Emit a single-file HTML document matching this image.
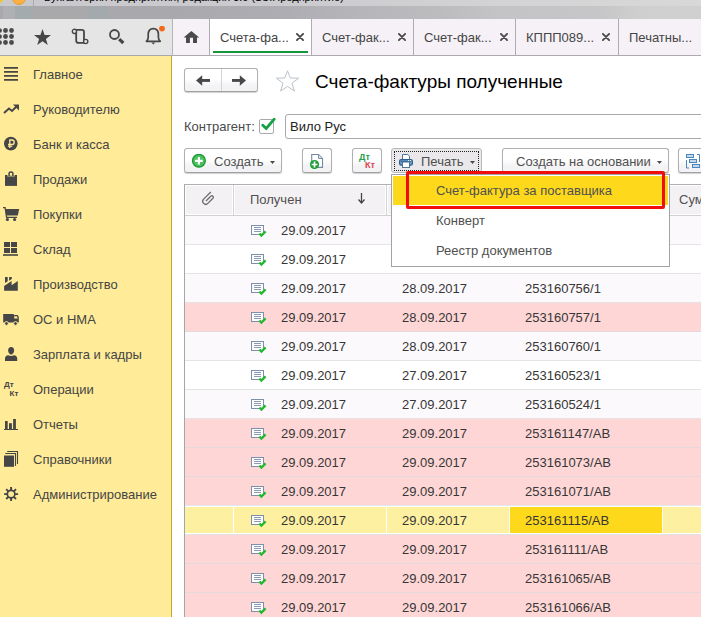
<!DOCTYPE html>
<html><head><meta charset="utf-8">
<style>
*{box-sizing:border-box;margin:0;padding:0}
html,body{width:701px;height:617px;overflow:hidden;background:#fff;font-family:"Liberation Sans",sans-serif;font-size:13px;color:#333}
.a{position:absolute;white-space:nowrap}
.btn{position:absolute;border:1px solid #b0b0b0;border-bottom-color:#a0a0a0;border-radius:3px;background:linear-gradient(#ffffff 45%,#f3f2f5 75%);box-shadow:0 1px 1px rgba(0,0,0,.18)}
.dd{position:absolute;width:5px;height:3px;background:#4a4a4a;clip-path:polygon(0 0,100% 0,50% 100%)}
.si{position:absolute;left:33px;color:#454545;white-space:nowrap}
.tx{position:absolute;color:#454545;white-space:nowrap}
.cell{position:absolute;white-space:nowrap;color:#363636}
</style></head><body>
<div class="a" style="left:0;top:0;width:701px;height:6px;background:linear-gradient(90deg,#c9c9cd 0px,#cbcbcf 300px,#d3d3d5 500px,#d8d8d8 701px);overflow:hidden"><div class="a" style="left:-6px;top:-6px;width:9px;height:9px;border-radius:50%;background:#f2c51c"></div><div class="a" style="left:12px;top:-9px;width:14px;height:14px;border-radius:50%;background:#fbb143;border:1px solid #e89a2a"></div><div class="a" style="left:33px;top:0;width:1px;height:6px;background:#aaa"></div><div class="a" style="left:44px;top:-9px;font-size:11px;color:#000">Бухгалтерия предприятия, редакция 3.0 (1С:Предприятие)</div></div>
<div class="a" style="left:0;top:6px;width:701px;height:13px;background:linear-gradient(90deg,#a9a9ab 0px,#a9a9ad 170px,#adadb3 290px,#b6b6ba 360px,#bcbcbf 440px,#c4c4c7 500px,#c6c6c8 600px,#cfcfcf 640px,#d0d0d0 701px)"></div>
<div class="a" style="left:3px;top:6px;width:12px;height:13px;background:#aeb0b3"></div>
<div class="a" style="left:15px;top:6px;width:17px;height:13px;background:#a4abae"></div>
<div class="a" style="left:88px;top:6px;width:20px;height:13px;background:#a4a9ae"></div>
<div class="a" style="left:0;top:19px;width:173px;height:37px;background:#e5e5e5;border-bottom:1px solid #a9a9ad;border-right:1px solid #b5b5b5"></div>
<svg class="a" style="left:0;top:0" width="20" height="50" viewBox="0 0 20 50"><circle cx="-0.5" cy="30.5" r="2.4" fill="#4a4c4a"/><circle cx="-0.5" cy="36.5" r="2.4" fill="#4a4c4a"/><circle cx="-0.5" cy="42.5" r="2.4" fill="#4a4c4a"/><circle cx="5.5" cy="30.5" r="2.4" fill="#4a4c4a"/><circle cx="5.5" cy="36.5" r="2.4" fill="#4a4c4a"/><circle cx="5.5" cy="42.5" r="2.4" fill="#4a4c4a"/><circle cx="11.5" cy="30.5" r="2.4" fill="#4a4c4a"/><circle cx="11.5" cy="36.5" r="2.4" fill="#4a4c4a"/><circle cx="11.5" cy="42.5" r="2.4" fill="#4a4c4a"/></svg>
<svg class="a" style="left:33px;top:28px" width="19" height="18" viewBox="0 0 19 18"><path d="M9.5 1 L11.6 7 L18 7 L12.9 10.9 L14.8 17 L9.5 13.3 L4.2 17 L6.1 10.9 L1 7 L7.4 7 Z" fill="#464646"/></svg>
<svg class="a" style="left:71px;top:28px" width="19" height="18" viewBox="0 0 19 18"><path d="M3.4 1.8 H10.8 Q13 1.8 13 4 V13" stroke="#464646" stroke-width="1.8" fill="none"/><path d="M5.2 4 V12.4 Q5.2 14.9 7.7 14.9 H14.7" stroke="#464646" stroke-width="1.8" fill="none"/><circle cx="3.4" cy="3.4" r="2.1" fill="#e5e5e5" stroke="#464646" stroke-width="1.4"/><circle cx="14.7" cy="13.5" r="2.1" fill="#e5e5e5" stroke="#464646" stroke-width="1.4"/></svg>
<svg class="a" style="left:106px;top:27px" width="19" height="18" viewBox="0 0 19 18"><circle cx="8.5" cy="7.5" r="4.5" stroke="#464646" stroke-width="1.8" fill="none"/><path d="M13.2 12.2 L17.3 16" stroke="#464646" stroke-width="3.2"/></svg>
<svg class="a" style="left:144px;top:26px" width="24" height="20" viewBox="0 0 24 20"><path d="M2.4 15.3 H16.2 Q14.5 14 14.4 11.5 V8.6 Q14.4 2.6 9.3 2.6 Q4.2 2.6 4.2 8.6 V11.5 Q4.1 14 2.4 15.3 Z" stroke="#464646" stroke-width="1.7" fill="none" stroke-linejoin="round"/><path d="M7.3 16.6 H11.3 L9.3 18.6 Z" fill="#464646"/><circle cx="18" cy="2.6" r="2.9" fill="#f46a1c"/></svg>
<div class="a" style="left:0;top:56px;width:172px;height:561px;background:#ffeb98;border-right:1px solid #c4a726"></div>
<div class="si" style="top:66.5px">Главное</div>
<div class="si" style="top:101.5px">Руководителю</div>
<div class="si" style="top:136.5px">Банк и касса</div>
<div class="si" style="top:171.5px">Продажи</div>
<div class="si" style="top:206.5px">Покупки</div>
<div class="si" style="top:241.5px">Склад</div>
<div class="si" style="top:276.5px">Производство</div>
<div class="si" style="top:311.5px">ОС и НМА</div>
<div class="si" style="top:346.5px">Зарплата и кадры</div>
<div class="si" style="top:381.5px">Операции</div>
<div class="si" style="top:416.5px">Отчеты</div>
<div class="si" style="top:451.5px">Справочники</div>
<div class="si" style="top:486.5px">Администрирование</div>
<svg class="a" style="left:0;top:60px" width="22" height="24"><path d="M4 7.8 H18 M4 11.85 H18 M4 15.9 H18 M4 19.95 H18" stroke="#464646" stroke-width="1.7"/></svg>
<svg class="a" style="left:0;top:99px" width="22" height="20"><path d="M4 14 L9 9.5 L12 12 L16.5 7.5" stroke="#464646" stroke-width="2" fill="none"/><path d="M13 5.5 H19 V11.5 Z" fill="#464646"/></svg>
<svg class="a" style="left:0;top:133px" width="22" height="22"><circle cx="10.8" cy="10.6" r="6.8" fill="#464646"/><path d="M9.8 15 V7 H12.1 Q14.2 7 14.2 9.2 Q14.2 11.4 12.1 11.4 H8 M8 13.2 H12.4" stroke="#ffeb98" stroke-width="1.3" fill="none"/></svg>
<svg class="a" style="left:0;top:168px" width="22" height="22"><path d="M5 7 H17 V17.9 H5 Z" fill="#464646"/><path d="M9.1 8.5 V5.6 Q9.1 3.9 11 3.9 Q12.9 3.9 12.9 5.6 V8.5" stroke="#ffeb98" stroke-width="3.3" fill="none"/><path d="M9.1 8.3 V5.6 Q9.1 3.9 11 3.9 Q12.9 3.9 12.9 5.6 V8.3" stroke="#464646" stroke-width="1.5" fill="none"/></svg>
<svg class="a" style="left:0;top:203px" width="22" height="22"><path d="M3 4.7 H5.1 L6.6 14.3 H17" stroke="#464646" stroke-width="1.3" fill="none"/><path d="M5.2 6 H19.2 L17.8 12.4 H6.2 Z" fill="#464646"/><circle cx="7.4" cy="16.5" r="1.6" fill="#464646"/><circle cx="14.6" cy="16.5" r="1.6" fill="#464646"/></svg>
<svg class="a" style="left:0;top:238px" width="22" height="22"><rect x="4" y="4" width="6" height="5" fill="#464646"/><rect x="11" y="4" width="6" height="5" fill="#464646"/><rect x="4" y="10" width="6" height="5" fill="#464646"/><rect x="11" y="10" width="6" height="5" fill="#464646"/><rect x="3" y="16.2" width="15" height="1.6" fill="#464646"/></svg>
<svg class="a" style="left:0;top:272px" width="22" height="22"><path d="M4.1 18.8 V13.9 L11.6 9 V13.2 L17.8 8.9 V18.8 Z" fill="#464646"/><path d="M5 5 H7.7 V9.3 L5 11 Z M9.1 5 H11.8 V7.1 L9.1 8.8 Z" fill="#464646"/></svg>
<svg class="a" style="left:0;top:308px" width="22" height="22"><path d="M3.2 6 H13.8 V7 H17.6 L18.8 9 V14.6 H3.2 Z" fill="#464646"/><path d="M14.2 8.2 H16.9 L17.8 10.4 H14.2 Z" fill="#ffeb98"/><circle cx="6.5" cy="15.5" r="1.9" fill="#464646" stroke="#ffeb98" stroke-width="1"/><circle cx="15.5" cy="15.5" r="1.9" fill="#464646" stroke="#ffeb98" stroke-width="1"/></svg>
<svg class="a" style="left:0;top:343px" width="22" height="22"><path d="M11.1 4 Q14.1 4 14.1 7.5 Q14.1 10.4 11.1 11.8 Q8.1 10.4 8.1 7.5 Q8.1 4 11.1 4 Z" fill="#464646"/><path d="M5 17.9 V15.6 Q5 12.6 8.4 12.2 Q11.1 13.6 13.8 12.2 Q17.2 12.6 17.2 15.6 V17.9 Z" fill="#464646"/></svg>
<div class="a" style="left:4px;top:381px;font-size:8px;font-weight:bold;color:#464646;line-height:8px">Дт</div><div class="a" style="left:9.5px;top:390px;font-size:8px;font-weight:bold;color:#464646;line-height:8px">Кт</div>
<svg class="a" style="left:0;top:413px" width="22" height="22"><rect x="5" y="8" width="2.7" height="8" fill="#464646"/><rect x="9" y="10.2" width="2.9" height="5.8" fill="#464646"/><rect x="13.1" y="6" width="2.8" height="10" fill="#464646"/><rect x="4" y="16" width="14" height="1" fill="#464646"/></svg>
<svg class="a" style="left:0;top:448px" width="22" height="22"><rect x="4" y="7.5" width="10" height="11.3" fill="#464646"/><path d="M5.3 5.5 H15.5 V17.9" stroke="#464646" stroke-width="1.1" fill="none"/><path d="M7.2 3.5 H17.5 V16" stroke="#464646" stroke-width="1.1" fill="none"/></svg>
<svg class="a" style="left:0;top:483px" width="22" height="22"><g transform="translate(11.1 11.1)"><circle r="3.8" fill="none" stroke="#464646" stroke-width="1.7"/><g stroke="#464646" stroke-width="1.9"><path d="M0 -7 V-4 M0 7 V4 M-7 0 H-4 M7 0 H4 M-4.9 -4.9 L-2.8 -2.8 M4.9 4.9 L2.8 2.8 M-4.9 4.9 L-2.8 2.8 M4.9 -4.9 L2.8 -2.8"/></g></g></svg>
<div class="a" style="left:173px;top:19px;width:528px;height:37px;background:#f6f1f6;border-bottom:1px solid #acaab0"></div>
<svg class="a" style="left:182px;top:30px" width="18" height="15" viewBox="0 0 18 15"><path d="M9.4 1 L17.2 7.6 H15 V13 H11 V7.8 H7.9 V13 H4 V7.6 H1.6 Z" fill="#4a4a4a"/></svg>
<div class="a" style="left:209px;top:19px;width:1px;height:36px;background:#aeacb0"></div>
<div class="a" style="left:210px;top:19px;width:101px;height:36px;background:#fff"></div>
<div class="a" style="left:213px;top:51px;width:95px;height:2px;background:#17953a"></div>
<div class="tx" style="left:220px;top:30px">Счета-фа...</div>
<svg class="a" style="left:296px;top:33px" width="8" height="8" viewBox="0 0 8 8"><path d="M0.9 0.9 L7.1 7.1 M7.1 0.9 L0.9 7.1" stroke="#484848" stroke-width="1.8" stroke-linecap="round"/></svg>
<div class="a" style="left:311px;top:19px;width:1px;height:36px;background:#aeacb0"></div>
<div class="tx" style="left:322px;top:30px">Счет-фак...</div>
<svg class="a" style="left:398px;top:33px" width="8" height="8" viewBox="0 0 8 8"><path d="M0.9 0.9 L7.1 7.1 M7.1 0.9 L0.9 7.1" stroke="#484848" stroke-width="1.8" stroke-linecap="round"/></svg>
<div class="a" style="left:413px;top:19px;width:1px;height:36px;background:#aeacb0"></div>
<div class="tx" style="left:424px;top:30px">Счет-фак...</div>
<svg class="a" style="left:500px;top:33px" width="8" height="8" viewBox="0 0 8 8"><path d="M0.9 0.9 L7.1 7.1 M7.1 0.9 L0.9 7.1" stroke="#484848" stroke-width="1.8" stroke-linecap="round"/></svg>
<div class="a" style="left:515px;top:19px;width:1px;height:36px;background:#aeacb0"></div>
<div class="tx" style="left:526px;top:30px">КППП089...</div>
<svg class="a" style="left:602px;top:33px" width="8" height="8" viewBox="0 0 8 8"><path d="M0.9 0.9 L7.1 7.1 M7.1 0.9 L0.9 7.1" stroke="#484848" stroke-width="1.8" stroke-linecap="round"/></svg>
<div class="a" style="left:618px;top:19px;width:1px;height:36px;background:#aeacb0"></div>
<div class="tx" style="left:629px;top:30px">Печатны...</div>
<div class="btn" style="left:184px;top:68px;width:74px;height:24px"></div>
<div class="a" style="left:221px;top:69px;width:1px;height:22px;background:#d4d4d4"></div>
<svg class="a" style="left:196px;top:75px" width="15" height="12" viewBox="0 0 15 12"><path d="M0 5.4 L6.2 0.2 V10.8 Z" fill="#484848"/><rect x="6" y="4" width="8" height="2.9" fill="#484848"/></svg>
<svg class="a" style="left:232px;top:75px" width="15" height="12" viewBox="0 0 15 12"><path d="M14 5.4 L7.8 0.2 V10.8 Z" fill="#484848"/><rect x="0" y="4" width="8" height="2.9" fill="#484848"/></svg>
<svg class="a" style="left:275px;top:70px" width="25" height="22" viewBox="0 0 25 22"><path d="M12.5 0.8 L15.3 8 L23.6 8.2 L17 13.2 L19.4 21 L12.5 16.4 L5.6 21 L8 13.2 L1.4 8.2 L9.7 8 Z" stroke="#b9c2cb" stroke-width="1" fill="none"/></svg>
<div class="a" style="left:315px;top:70.5px;font-size:19px;color:#000">Счета-фактуры полученные</div>
<div class="tx" style="left:184px;top:119px;color:#4a4a4a">Контрагент:</div>
<div class="a" style="left:259px;top:119px;width:15px;height:15px;border:1px solid #a9a9a9;border-radius:2px;background:#fff"></div>
<svg class="a" style="left:260px;top:117px" width="16" height="15" viewBox="0 0 16 15"><path d="M2.8 8.2 L6.2 11.5 L14.2 2.2" stroke="#12a244" stroke-width="2.8" fill="none" stroke-linecap="round"/></svg>
<div class="a" style="left:285px;top:114px;width:430px;height:25px;border:1px solid #a9a8ad;border-radius:3px;background:#fff"></div>
<div class="tx" style="left:290px;top:119px;color:#222">Вило Рус</div>
<div class="btn" style="left:184px;top:148px;width:98px;height:25px"></div>
<svg class="a" style="left:191px;top:154px" width="16" height="16" viewBox="0 0 16 16"><circle cx="7.9" cy="6.8" r="6.4" fill="#4dc162" stroke="#16982b" stroke-width="1.3"/><path d="M7.9 3 V10.6 M4.1 6.8 H11.7" stroke="#fff" stroke-width="2.2"/></svg>
<div class="tx" style="left:214px;top:154px;color:#505050">Создать</div>
<div class="dd" style="left:270px;top:161px"></div>
<div class="btn" style="left:302px;top:148px;width:30px;height:25px"></div>
<svg class="a" style="left:309px;top:153px" width="16" height="16" viewBox="0 0 16 16"><path d="M2.7 1.5 H9.6 L13.5 5.4 V14.4 H2.7 Z" stroke="#7489a6" stroke-width="1.1" fill="#fff"/><path d="M9.6 1.8 V5.4 H13.2" stroke="#7489a6" stroke-width="1" fill="#e8eef5"/><circle cx="5.5" cy="11.5" r="4.6" fill="#1f9f36"/><path d="M5.5 8.6 V14.4 M2.6 11.5 H8.4" stroke="#fff" stroke-width="1.7"/></svg>
<div class="btn" style="left:352px;top:148px;width:30px;height:25px"></div>
<div class="a" style="left:359px;top:152.5px;font-size:9px;font-weight:bold;color:#2aa052;line-height:9px">Дт</div>
<div class="a" style="left:365px;top:161px;font-size:9px;font-weight:bold;color:#e0454f;line-height:9px">Кт</div>
<div class="a" style="left:391px;top:148px;width:91px;height:25px;border:1px solid #b9b9b9;border-radius:3px;background:#eae8ea"></div>
<div class="a" style="left:394px;top:151px;width:85px;height:20px;border:1px dotted #222"></div>
<svg class="a" style="left:398px;top:153px" width="16" height="16" viewBox="0 0 16 16"><path d="M4.5 6.5 V1.5 H9.8 L11.5 3.2 V6.5" stroke="#4f739a" stroke-width="1" fill="#fff"/><rect x="1.6" y="6.6" width="12.8" height="5.6" rx="1.6" fill="#72a0cc" stroke="#2e5e8e" stroke-width="1.2"/><path d="M3 8.4 H13" stroke="#2e5e8e" stroke-width="1"/><circle cx="10.6" cy="7.6" r="0.6" fill="#fff"/><circle cx="12.5" cy="7.6" r="0.6" fill="#fff"/><rect x="4.5" y="9" width="7" height="5.5" fill="#fff" stroke="#4f739a" stroke-width="1"/></svg>
<div class="tx" style="left:421px;top:154px;color:#505050">Печать</div>
<div class="dd" style="left:470px;top:161px"></div>
<div class="btn" style="left:502px;top:148px;width:167px;height:25px"></div>
<div class="tx" style="left:516px;top:154px;color:#505050">Создать на основании</div>
<div class="dd" style="left:657px;top:161px"></div>
<div class="btn" style="left:678px;top:148px;width:40px;height:25px"></div>
<svg class="a" style="left:685px;top:153px" width="16" height="16" viewBox="0 0 16 16"><rect x="1.5" y="1.5" width="7" height="3" fill="#c6d8ea" stroke="#4a86c0"/><rect x="4.5" y="6.5" width="7" height="3" fill="#c6d8ea" stroke="#4a86c0"/><rect x="7.5" y="11.5" width="7" height="3" fill="#c6d8ea" stroke="#4a86c0"/><path d="M1.5 7 V15 H4 M14.5 9 V1.5 H12" stroke="#4a86c0" fill="none"/></svg>
<div class="a" style="left:184px;top:184px;width:517px;height:433px;border-left:1px solid #a6a6a6;border-top:1px solid #b0b0b0;background:#fff"></div>
<div class="a" style="left:186px;top:186px;width:515px;height:28px;background:#f4f1f4"></div>
<div class="a" style="left:185px;top:215px;width:516px;height:1px;background:#d0d0d0"></div>
<div class="a" style="left:232px;top:185px;width:3px;height:30px;background:#fff"></div>
<div class="a" style="left:233px;top:185px;width:1px;height:30px;background:#d4d4d4"></div>
<div class="a" style="left:385px;top:185px;width:3px;height:30px;background:#fff"></div>
<div class="a" style="left:386px;top:185px;width:1px;height:30px;background:#d4d4d4"></div>
<div class="a" style="left:508px;top:185px;width:3px;height:30px;background:#fff"></div>
<div class="a" style="left:509px;top:185px;width:1px;height:30px;background:#d4d4d4"></div>
<div class="a" style="left:662px;top:185px;width:3px;height:30px;background:#fff"></div>
<div class="a" style="left:663px;top:185px;width:1px;height:30px;background:#d4d4d4"></div>
<svg class="a" style="left:198px;top:188px" width="22" height="22" viewBox="0 0 22 22"><path d="M0 0.3 V10.5 A3 3 0 0 0 6 10.5 V3.3 A1.5 1.5 0 0 0 3 3.3 V10.2" transform="translate(10.2 10.8) rotate(45) translate(-3 -7)" stroke="#6e6e6e" stroke-width="1.3" fill="none"/></svg>
<div class="tx" style="left:250px;top:192px;color:#505050">Получен</div>
<svg class="a" style="left:358px;top:193px" width="7" height="11" viewBox="0 0 7 11"><path d="M3.5 0 V9 M0.5 6.5 L3.5 10 L6.5 6.5" stroke="#444" stroke-width="1.3" fill="none"/></svg>
<div class="tx" style="left:679px;top:192px;color:#505050">Сумма</div>
<div class="a" style="left:185px;top:216px;width:516px;height:28px;background:#fcf9fc"></div>
<div class="a" style="left:185px;top:244px;width:516px;height:1px;background:#e6e3e6"></div>
<svg class="a" style="left:251px;top:225px" width="16" height="13" viewBox="0 0 16 13"><rect x="0.5" y="0.5" width="12" height="9" fill="#fdfdfe" stroke="#7d90aa"/><path d="M3 2.5 H10 M3 4.5 H10 M3 6.5 H10" stroke="#8a9bb3" stroke-width="1"/><path d="M8.4 8.4 L10.4 10.6 L14.6 6.4" stroke="#22b830" stroke-width="2.3" fill="none"/></svg>
<div class="cell" style="left:281px;top:223px">29.09.2017</div>
<div class="a" style="left:185px;top:245px;width:516px;height:28px;background:#ffffff"></div>
<div class="a" style="left:185px;top:273px;width:516px;height:1px;background:#e6e3e6"></div>
<svg class="a" style="left:251px;top:254px" width="16" height="13" viewBox="0 0 16 13"><rect x="0.5" y="0.5" width="12" height="9" fill="#fdfdfe" stroke="#7d90aa"/><path d="M3 2.5 H10 M3 4.5 H10 M3 6.5 H10" stroke="#8a9bb3" stroke-width="1"/><path d="M8.4 8.4 L10.4 10.6 L14.6 6.4" stroke="#22b830" stroke-width="2.3" fill="none"/></svg>
<div class="cell" style="left:281px;top:252px">29.09.2017</div>
<div class="a" style="left:185px;top:274px;width:516px;height:28px;background:#fcf9fc"></div>
<div class="a" style="left:185px;top:302px;width:516px;height:1px;background:#e6e3e6"></div>
<svg class="a" style="left:251px;top:283px" width="16" height="13" viewBox="0 0 16 13"><rect x="0.5" y="0.5" width="12" height="9" fill="#fdfdfe" stroke="#7d90aa"/><path d="M3 2.5 H10 M3 4.5 H10 M3 6.5 H10" stroke="#8a9bb3" stroke-width="1"/><path d="M8.4 8.4 L10.4 10.6 L14.6 6.4" stroke="#22b830" stroke-width="2.3" fill="none"/></svg>
<div class="cell" style="left:281px;top:281px">29.09.2017</div>
<div class="cell" style="left:402px;top:281px">28.09.2017</div>
<div class="cell" style="left:525px;top:281px">253160756/1</div>
<div class="a" style="left:185px;top:303px;width:516px;height:28px;background:#ffd6d6"></div>
<div class="a" style="left:185px;top:331px;width:516px;height:1px;background:#e4d8d8"></div>
<svg class="a" style="left:251px;top:312px" width="16" height="13" viewBox="0 0 16 13"><rect x="0.5" y="0.5" width="12" height="9" fill="#fdfdfe" stroke="#7d90aa"/><path d="M3 2.5 H10 M3 4.5 H10 M3 6.5 H10" stroke="#8a9bb3" stroke-width="1"/><path d="M8.4 8.4 L10.4 10.6 L14.6 6.4" stroke="#22b830" stroke-width="2.3" fill="none"/></svg>
<div class="cell" style="left:281px;top:310px">29.09.2017</div>
<div class="cell" style="left:402px;top:310px">28.09.2017</div>
<div class="cell" style="left:525px;top:310px">253160757/1</div>
<div class="a" style="left:185px;top:332px;width:516px;height:28px;background:#fcf9fc"></div>
<div class="a" style="left:185px;top:360px;width:516px;height:1px;background:#e6e3e6"></div>
<svg class="a" style="left:251px;top:341px" width="16" height="13" viewBox="0 0 16 13"><rect x="0.5" y="0.5" width="12" height="9" fill="#fdfdfe" stroke="#7d90aa"/><path d="M3 2.5 H10 M3 4.5 H10 M3 6.5 H10" stroke="#8a9bb3" stroke-width="1"/><path d="M8.4 8.4 L10.4 10.6 L14.6 6.4" stroke="#22b830" stroke-width="2.3" fill="none"/></svg>
<div class="cell" style="left:281px;top:339px">29.09.2017</div>
<div class="cell" style="left:402px;top:339px">28.09.2017</div>
<div class="cell" style="left:525px;top:339px">253160760/1</div>
<div class="a" style="left:185px;top:361px;width:516px;height:28px;background:#ffffff"></div>
<div class="a" style="left:185px;top:389px;width:516px;height:1px;background:#e6e3e6"></div>
<svg class="a" style="left:251px;top:370px" width="16" height="13" viewBox="0 0 16 13"><rect x="0.5" y="0.5" width="12" height="9" fill="#fdfdfe" stroke="#7d90aa"/><path d="M3 2.5 H10 M3 4.5 H10 M3 6.5 H10" stroke="#8a9bb3" stroke-width="1"/><path d="M8.4 8.4 L10.4 10.6 L14.6 6.4" stroke="#22b830" stroke-width="2.3" fill="none"/></svg>
<div class="cell" style="left:281px;top:368px">29.09.2017</div>
<div class="cell" style="left:402px;top:368px">27.09.2017</div>
<div class="cell" style="left:525px;top:368px">253160523/1</div>
<div class="a" style="left:185px;top:390px;width:516px;height:28px;background:#fcf9fc"></div>
<div class="a" style="left:185px;top:418px;width:516px;height:1px;background:#e6e3e6"></div>
<svg class="a" style="left:251px;top:399px" width="16" height="13" viewBox="0 0 16 13"><rect x="0.5" y="0.5" width="12" height="9" fill="#fdfdfe" stroke="#7d90aa"/><path d="M3 2.5 H10 M3 4.5 H10 M3 6.5 H10" stroke="#8a9bb3" stroke-width="1"/><path d="M8.4 8.4 L10.4 10.6 L14.6 6.4" stroke="#22b830" stroke-width="2.3" fill="none"/></svg>
<div class="cell" style="left:281px;top:397px">29.09.2017</div>
<div class="cell" style="left:402px;top:397px">27.09.2017</div>
<div class="cell" style="left:525px;top:397px">253160524/1</div>
<div class="a" style="left:185px;top:419px;width:516px;height:28px;background:#ffd6d6"></div>
<div class="a" style="left:185px;top:447px;width:516px;height:1px;background:#e4d8d8"></div>
<svg class="a" style="left:251px;top:428px" width="16" height="13" viewBox="0 0 16 13"><rect x="0.5" y="0.5" width="12" height="9" fill="#fdfdfe" stroke="#7d90aa"/><path d="M3 2.5 H10 M3 4.5 H10 M3 6.5 H10" stroke="#8a9bb3" stroke-width="1"/><path d="M8.4 8.4 L10.4 10.6 L14.6 6.4" stroke="#22b830" stroke-width="2.3" fill="none"/></svg>
<div class="cell" style="left:281px;top:426px">29.09.2017</div>
<div class="cell" style="left:402px;top:426px">29.09.2017</div>
<div class="cell" style="left:525px;top:426px">253161147/AB</div>
<div class="a" style="left:185px;top:448px;width:516px;height:28px;background:#ffd6d6"></div>
<div class="a" style="left:185px;top:476px;width:516px;height:1px;background:#e4d8d8"></div>
<svg class="a" style="left:251px;top:457px" width="16" height="13" viewBox="0 0 16 13"><rect x="0.5" y="0.5" width="12" height="9" fill="#fdfdfe" stroke="#7d90aa"/><path d="M3 2.5 H10 M3 4.5 H10 M3 6.5 H10" stroke="#8a9bb3" stroke-width="1"/><path d="M8.4 8.4 L10.4 10.6 L14.6 6.4" stroke="#22b830" stroke-width="2.3" fill="none"/></svg>
<div class="cell" style="left:281px;top:455px">29.09.2017</div>
<div class="cell" style="left:402px;top:455px">29.09.2017</div>
<div class="cell" style="left:525px;top:455px">253161073/AB</div>
<div class="a" style="left:185px;top:477px;width:516px;height:28px;background:#ffd6d6"></div>
<div class="a" style="left:185px;top:505px;width:516px;height:1px;background:#e4d8d8"></div>
<svg class="a" style="left:251px;top:486px" width="16" height="13" viewBox="0 0 16 13"><rect x="0.5" y="0.5" width="12" height="9" fill="#fdfdfe" stroke="#7d90aa"/><path d="M3 2.5 H10 M3 4.5 H10 M3 6.5 H10" stroke="#8a9bb3" stroke-width="1"/><path d="M8.4 8.4 L10.4 10.6 L14.6 6.4" stroke="#22b830" stroke-width="2.3" fill="none"/></svg>
<div class="cell" style="left:281px;top:484px">29.09.2017</div>
<div class="cell" style="left:402px;top:484px">29.09.2017</div>
<div class="cell" style="left:525px;top:484px">253161071/AB</div>
<div class="a" style="left:185px;top:506px;width:516px;height:28px;background:#fdf0a0"></div>
<div class="a" style="left:185px;top:534px;width:516px;height:1px;background:#e2e2e2"></div>
<div class="a" style="left:185px;top:506px;width:516px;height:28px;border-top:1px solid #fff;border-bottom:1px solid #fff"></div>
<div class="a" style="left:185px;top:505px;width:516px;height:1px;background:#e6e8ec"></div>
<div class="a" style="left:233px;top:506px;width:1px;height:28px;background:#fff"></div>
<div class="a" style="left:386px;top:506px;width:1px;height:28px;background:#fff"></div>
<div class="a" style="left:509px;top:506px;width:1px;height:28px;background:#fff"></div>
<div class="a" style="left:662px;top:506px;width:1px;height:28px;background:#fff"></div>
<div class="a" style="left:510px;top:507px;width:152px;height:26px;background:#fed81a"></div>
<svg class="a" style="left:251px;top:515px" width="16" height="13" viewBox="0 0 16 13"><rect x="0.5" y="0.5" width="12" height="9" fill="#fdfdfe" stroke="#7d90aa"/><path d="M3 2.5 H10 M3 4.5 H10 M3 6.5 H10" stroke="#8a9bb3" stroke-width="1"/><path d="M8.4 8.4 L10.4 10.6 L14.6 6.4" stroke="#22b830" stroke-width="2.3" fill="none"/></svg>
<div class="cell" style="left:281px;top:513px">29.09.2017</div>
<div class="cell" style="left:402px;top:513px">29.09.2017</div>
<div class="cell" style="left:525px;top:513px">253161115/AB</div>
<div class="a" style="left:185px;top:535px;width:516px;height:28px;background:#ffd6d6"></div>
<div class="a" style="left:185px;top:563px;width:516px;height:1px;background:#e4d8d8"></div>
<svg class="a" style="left:251px;top:544px" width="16" height="13" viewBox="0 0 16 13"><rect x="0.5" y="0.5" width="12" height="9" fill="#fdfdfe" stroke="#7d90aa"/><path d="M3 2.5 H10 M3 4.5 H10 M3 6.5 H10" stroke="#8a9bb3" stroke-width="1"/><path d="M8.4 8.4 L10.4 10.6 L14.6 6.4" stroke="#22b830" stroke-width="2.3" fill="none"/></svg>
<div class="cell" style="left:281px;top:542px">29.09.2017</div>
<div class="cell" style="left:402px;top:542px">29.09.2017</div>
<div class="cell" style="left:525px;top:542px">253161111/AB</div>
<div class="a" style="left:185px;top:564px;width:516px;height:28px;background:#ffd6d6"></div>
<div class="a" style="left:185px;top:592px;width:516px;height:1px;background:#e4d8d8"></div>
<svg class="a" style="left:251px;top:573px" width="16" height="13" viewBox="0 0 16 13"><rect x="0.5" y="0.5" width="12" height="9" fill="#fdfdfe" stroke="#7d90aa"/><path d="M3 2.5 H10 M3 4.5 H10 M3 6.5 H10" stroke="#8a9bb3" stroke-width="1"/><path d="M8.4 8.4 L10.4 10.6 L14.6 6.4" stroke="#22b830" stroke-width="2.3" fill="none"/></svg>
<div class="cell" style="left:281px;top:571px">29.09.2017</div>
<div class="cell" style="left:402px;top:571px">29.09.2017</div>
<div class="cell" style="left:525px;top:571px">253161065/AB</div>
<div class="a" style="left:185px;top:593px;width:516px;height:28px;background:#ffd6d6"></div>
<div class="a" style="left:185px;top:621px;width:516px;height:1px;background:#e4d8d8"></div>
<svg class="a" style="left:251px;top:602px" width="16" height="13" viewBox="0 0 16 13"><rect x="0.5" y="0.5" width="12" height="9" fill="#fdfdfe" stroke="#7d90aa"/><path d="M3 2.5 H10 M3 4.5 H10 M3 6.5 H10" stroke="#8a9bb3" stroke-width="1"/><path d="M8.4 8.4 L10.4 10.6 L14.6 6.4" stroke="#22b830" stroke-width="2.3" fill="none"/></svg>
<div class="cell" style="left:281px;top:600px">29.09.2017</div>
<div class="cell" style="left:402px;top:600px">29.09.2017</div>
<div class="cell" style="left:525px;top:600px">253161066/AB</div>
<div class="a" style="left:391px;top:174px;width:279px;height:93px;background:#fff;border:1px solid #a4a2a8"></div>
<div class="a" style="left:393px;top:176px;width:275px;height:29px;background:#fdd81b"></div>
<div class="a" style="left:406px;top:171px;width:259px;height:38px;border:3px solid #f20d0d;border-radius:2px"></div>
<div class="tx" style="left:436px;top:183px;color:#505050">Счет-фактура за поставщика</div>
<div class="tx" style="left:436px;top:213px;color:#505050">Конверт</div>
<div class="tx" style="left:436px;top:243px;color:#505050">Реестр документов</div>
</body></html>
